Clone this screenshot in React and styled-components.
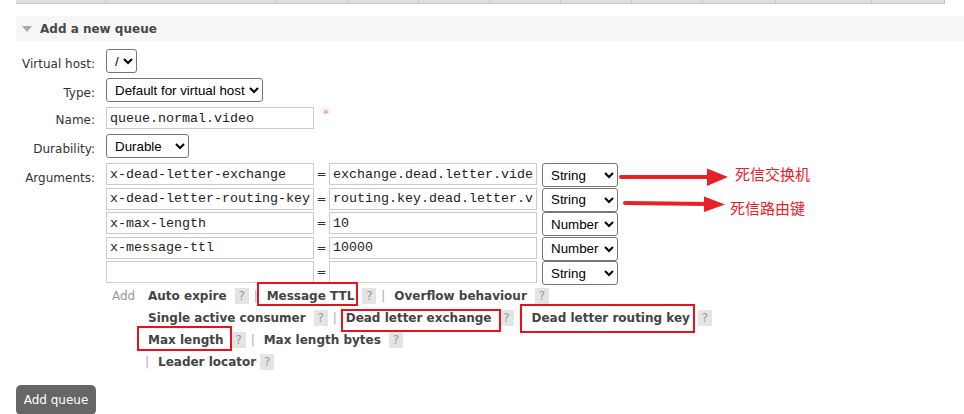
import React from 'react';
import styled, { createGlobalStyle } from 'styled-components';

const Global = createGlobalStyle`
  html, body { margin: 0; padding: 0; background: #fff; }
  body {
    font-family: "DejaVu Sans", Verdana, sans-serif;
    font-size: 12px;
    color: #484848;
    overflow: hidden;
  }
`;

const Page = styled.div`
  position: relative;
  width: 964px;
  height: 414px;
  overflow: hidden;
  padding-left: 16px;
  box-sizing: border-box;
`;

const TableEdge = styled.div`
  display: flex;
  width: 928px;
  height: 3px;
  background: #dedede;
  border-bottom: 1px solid #c8c8c8;
  border-right: 1px solid #bdbdbd;
  box-sizing: content-box;
`;

const EdgeCell = styled.div`
  width: ${p => p.$w}px;
  flex: none;
  box-sizing: border-box;
  border-right: 1px solid #c8c8c8;
  &:last-child { border-right: none; }
`;

const SectionHeader = styled.div`
  margin-top: 12px;
  height: 25px;
  background: #f6f6f6;
  display: flex;
  align-items: center;
  padding-left: 6px;
  gap: 8px;
  font-weight: bold;
  font-size: 12px;
  color: #484848;
`;

const Triangle = styled.span`
  width: 0;
  height: 0;
  border-left: 5.5px solid transparent;
  border-right: 5.5px solid transparent;
  border-top: 6px solid #aaa;
  margin-top: 1px;
`;

const FormGrid = styled.div`
  margin-top: 8px;
  display: grid;
  grid-template-columns: 79px 1fr;
  column-gap: 11px;
  row-gap: 5px;
  align-items: start;
`;

const Label = styled.div`
  text-align: right;
  line-height: 18px;
  padding-top: ${p => p.$pt ?? 6}px;
  color: #333;
  white-space: nowrap;
`;

const Control = styled.div`
  display: flex;
  align-items: flex-start;
  gap: 8px;
`;

const Select = styled.select`
  width: ${p => p.$w}px;
  height: 24px;
  font-family: "Liberation Sans", Arial, sans-serif;
  font-size: 13.33px;
  color: #000;
  background: #fff;
  border: 1px solid #767676;
  border-radius: 3px;
  padding: 0 0 0 4px;
  margin: 0;
  box-sizing: border-box;
`;

const TextInput = styled.input`
  width: 208px;
  height: 22px;
  font-family: "Liberation Mono", "Courier New", monospace;
  font-size: 13.33px;
  color: #222;
  border: 1px solid #cbcbcb;
  border-radius: 0;
  padding: 0 3px;
  margin: 0;
  box-sizing: border-box;
  outline: none;
`;

const Required = styled.span`
  color: #f08a8a;
  font-size: 12px;
  line-height: 14px;
  margin-left: 1px;
`;

const ArgsCell = styled.div`
  display: flex;
  flex-direction: column;
`;

const ArgRow = styled.div`
  display: flex;
  align-items: flex-start;
  height: 24.5px;
`;

const Equals = styled.span`
  width: 15px;
  text-align: center;
  line-height: 22px;
  color: #333;
`;

const TypeSelect = styled(Select)`
  margin-left: 5px;
`;

const OptionsBlock = styled.div`
  display: flex;
  margin-top: -1px;
  padding-left: 6px;
`;

const AddLabel = styled.div`
  width: 36px;
  line-height: 22px;
  color: #999;
`;

const OptionLines = styled.div`
  display: flex;
  flex-direction: column;
`;

const OptionLine = styled.div`
  display: flex;
  align-items: center;
  height: 22px;
  margin-left: ${p => p.$indent || 0}px;
`;

const OptionLabel = styled.span`
  position: relative;
  font-weight: bold;
  color: #444;
  line-height: 22px;
  white-space: nowrap;
  ${p => p.$mark && `
    &::before {
      content: "";
      position: absolute;
      top: ${p.$mark[0]}px;
      right: ${p.$mark[1]}px;
      bottom: ${p.$mark[2]}px;
      left: ${p.$mark[3]}px;
      border: 2px solid #e3141f;
      pointer-events: none;
    }
  `}
`;

const Help = styled.span`
  width: 14px;
  height: 16px;
  margin-left: ${p => p.$gap ?? 8}px;
  background: #e4e4e4;
  color: #9a9a9a;
  font-size: 12px;
  line-height: 16px;
  text-align: center;
`;

const Sep = styled.span`
  width: 4px;
  margin: 0 9px 0 5px;
  color: #aaa;
  text-align: center;
  line-height: 22px;
`;

const Button = styled.button`
  margin-top: 12px;
  width: 80px;
  height: 30px;
  background: #666;
  color: #fff;
  border: none;
  border-radius: 5px;
  font-family: "DejaVu Sans", Verdana, sans-serif;
  font-size: 12px;
  padding: 0;
`;

const Note = styled.span`
  position: absolute;
  left: ${p => p.$x}px;
  top: ${p => p.$y}px;
  font-family: "Noto Sans CJK SC", sans-serif;
  font-size: 15px;
  line-height: 20px;
  color: #e8202a;
  white-space: nowrap;
`;

const ArrowLayer = styled.svg`
  position: absolute;
  left: 0;
  top: 0;
  pointer-events: none;
`;

const edgeCells = [90, 171, 71, 71, 71, 71, 71, 71, 73, 96, 71];

const args = [
  { key: 'x-dead-letter-exchange', value: 'exchange.dead.letter.video', type: 'String' },
  { key: 'x-dead-letter-routing-key', value: 'routing.key.dead.letter.video', type: 'String' },
  { key: 'x-max-length', value: '10', type: 'Number' },
  { key: 'x-message-ttl', value: '10000', type: 'Number' },
  { key: '', value: '', type: 'String' },
];

const lines = [
  { items: [
    { label: 'Auto expire' },
    { label: 'Message TTL', mark: [-3, -4, 1, -10] },
    { label: 'Overflow behaviour' },
  ] },
  { items: [
    { label: 'Single active consumer' },
    { label: 'Dead letter exchange', mark: [2, -9, -3, -5] },
    { label: 'Dead letter routing key', mark: [-3, -5, -4, -12] },
  ] },
  { items: [
    { label: 'Max length', mark: [-3, -8, 0, -11] },
    { label: 'Max length bytes' },
  ] },
  { lead: true, items: [
    { label: 'Leader locator', gap: 4 },
  ] },
];

export default function App() {
  return (
    <Page>
      <Global />
      <TableEdge>
        {edgeCells.map((w, i) => <EdgeCell key={i} $w={w} />)}
      </TableEdge>

      <SectionHeader>
        <Triangle />
        Add a new queue
      </SectionHeader>

      <FormGrid>
        <Label>Virtual host:</Label>
        <Control>
          <Select $w={31} defaultValue="/"><option>/</option></Select>
        </Control>

        <Label>Type:</Label>
        <Control>
          <Select $w={157} defaultValue="Default for virtual host">
            <option>Default for virtual host</option>
          </Select>
        </Control>

        <Label $pt={4}>Name:</Label>
        <Control>
          <TextInput defaultValue="queue.normal.video" />
          <Required>*</Required>
        </Control>

        <Label>Durability:</Label>
        <Control>
          <Select $w={83} defaultValue="Durable"><option>Durable</option></Select>
        </Control>

        <Label>Arguments:</Label>
        <ArgsCell>
          {args.map((a, i) => (
            <ArgRow key={i}>
              <TextInput defaultValue={a.key} />
              <Equals>=</Equals>
              <TextInput defaultValue={a.value} />
              <TypeSelect $w={76} defaultValue={a.type}>
                <option>String</option>
                <option>Number</option>
                <option>Boolean</option>
                <option>List</option>
              </TypeSelect>
            </ArgRow>
          ))}
          <OptionsBlock>
            <AddLabel>Add</AddLabel>
            <OptionLines>
              {lines.map((line, li) => (
                <OptionLine key={li} $indent={line.lead ? -8 : 0}>
                  {line.lead && <Sep>|</Sep>}
                  {line.items.map((it, ii) => (
                    <React.Fragment key={ii}>
                      {ii > 0 && <Sep>|</Sep>}
                      <OptionLabel $mark={it.mark}>{it.label}</OptionLabel>
                      <Help $gap={it.gap}>?</Help>
                    </React.Fragment>
                  ))}
                </OptionLine>
              ))}
            </OptionLines>
          </OptionsBlock>
        </ArgsCell>
      </FormGrid>

      <Button>Add queue</Button>

      <ArrowLayer width="964" height="414" viewBox="0 0 964 414">
        <line x1="621" y1="177" x2="712" y2="177" stroke="#e8202a" strokeWidth="4" strokeLinecap="round" />
        <polygon points="707,168.5 728,177 707,186" fill="#e8202a" />
        <line x1="625" y1="203" x2="708" y2="204" stroke="#e8202a" strokeWidth="4" strokeLinecap="round" />
        <polygon points="704,196.5 725,204.5 704,212" fill="#e8202a" />
      </ArrowLayer>
      <Note $x={735} $y={164}>死信交换机</Note>
      <Note $x={730} $y={198}>死信路由键</Note>
    </Page>
  );
}
